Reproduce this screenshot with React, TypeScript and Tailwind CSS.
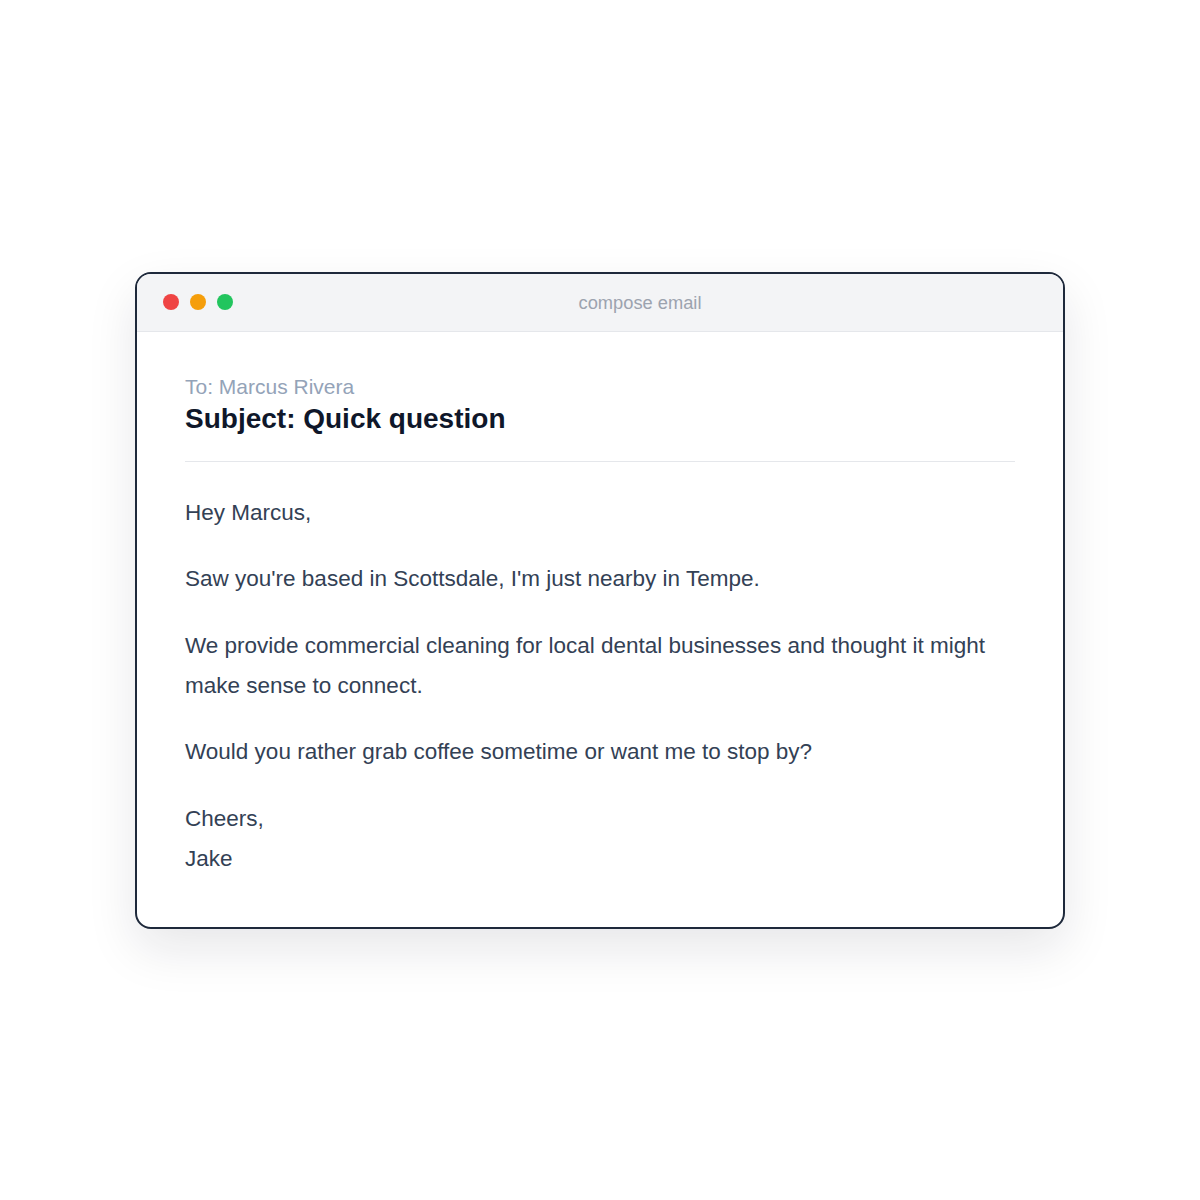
import React from "react";

const paragraphs = [
  ["Hey Marcus,"],
  ["Saw you're based in Scottsdale, I'm just nearby in Tempe."],
  [
    "We provide commercial cleaning for local dental businesses and thought it might make sense to connect.",
  ],
  ["Would you rather grab coffee sometime or want me to stop by?"],
  ["Cheers,", "Jake"],
];

const App = () => {
  return (
    <main
      className="min-h-screen w-full bg-white flex items-center justify-center"
      style={{ fontFamily: '"Liberation Sans", Arial, sans-serif' }}
    >
      <div className="w-[930px] rounded-2xl border-2 border-[#1e293b] bg-white overflow-hidden shadow-[0_20px_50px_rgba(15,23,42,0.10)]">
        {/* title bar */}
        <div className="flex items-center gap-3 pl-[26px] pr-7 py-4 bg-[#f3f4f6] border-b border-[#e5e7eb]">
          <div className="flex items-center gap-[11px]">
            <span className="w-4 h-4 rounded-full bg-[#ef4444]" />
            <span className="w-4 h-4 rounded-full bg-[#f59e0b]" />
            <span className="w-4 h-4 rounded-full bg-[#22c55e]" />
          </div>
          <div className="flex-1 text-center text-[18.3px] leading-[25px] text-[#9ca3af]">
            compose email
          </div>
        </div>

        <div className="px-12 pt-[41px] pb-12">
          <div className="pb-6 border-b border-[#e5e7eb]">
            <div className="text-[21px] leading-[28px] text-[#94a3b8]">
              To: Marcus Rivera
            </div>
            <div className="text-[28px] leading-[36px] font-bold text-[#0f172a]">
              Subject: Quick question
            </div>
          </div>

          <div className="pt-[31px] text-[22.5px] leading-[40px] text-[#334155]">
            {paragraphs.map((lines, i) => (
              <p key={i} className={i < paragraphs.length - 1 ? "mb-[26.5px]" : ""}>
                {lines.map((line, j) => (
                  <React.Fragment key={j}>
                    {j > 0 && <br />}
                    {line}
                  </React.Fragment>
                ))}
              </p>
            ))}
          </div>
        </div>
      </div>
    </main>
  );
};

export default App;
